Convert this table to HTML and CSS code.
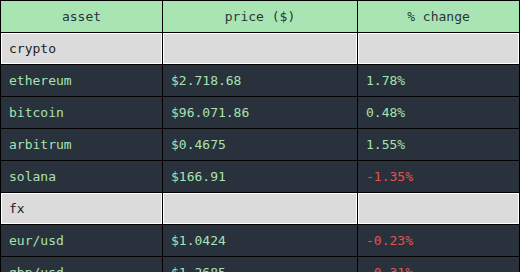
FILE: index.html
```html
<!DOCTYPE html>
<html>
<head>
<meta charset="utf-8">
<link rel="stylesheet" href="styles.css">
</head>
<body>
<div class="grid">
  <div class="cell head">asset</div>
  <div class="cell head">price ($)</div>
  <div class="cell head">% change</div>

  <div class="cell group">crypto</div>
  <div class="cell group"></div>
  <div class="cell group"></div>

  <div class="cell row">ethereum</div>
  <div class="cell row">$2.718.68</div>
  <div class="cell row">1.78%</div>

  <div class="cell row">bitcoin</div>
  <div class="cell row">$96.071.86</div>
  <div class="cell row">0.48%</div>

  <div class="cell row">arbitrum</div>
  <div class="cell row">$0.4675</div>
  <div class="cell row">1.55%</div>

  <div class="cell row">solana</div>
  <div class="cell row">$166.91</div>
  <div class="cell row neg">-1.35%</div>

  <div class="cell group">fx</div>
  <div class="cell group"></div>
  <div class="cell group"></div>

  <div class="cell row">eur/usd</div>
  <div class="cell row">$1.0424</div>
  <div class="cell row neg">-0.23%</div>

  <div class="cell row">gbp/usd</div>
  <div class="cell row">$1.2685</div>
  <div class="cell row neg">-0.31%</div>
</div>
</body>
</html>
```
FILE: styles.css
```css
html, body {
  margin: 0;
  padding: 0;
  background: #29313c;
}
.grid {
  display: grid;
  grid-template-columns: 161px 194px 161px;
  grid-auto-rows: 31px;
  gap: 1px;
  padding: 1px;
  background: #000;
  width: 518px;
  font-family: "DejaVu Sans Mono", monospace;
  font-size: 13px;
}
.cell {
  display: flex;
  align-items: center;
  padding-left: 8px;
}
.head {
  background: #a9e5b2;
  color: #2a333e;
  justify-content: center;
  padding-left: 0;
}
.group {
  background: #dbdbdb;
  color: #222;
  box-shadow: inset 0 0 0 1px #fff;
}
.row {
  background: #29313c;
  color: #a6e3b0;
}
.neg {
  color: #e5534f;
}
```
